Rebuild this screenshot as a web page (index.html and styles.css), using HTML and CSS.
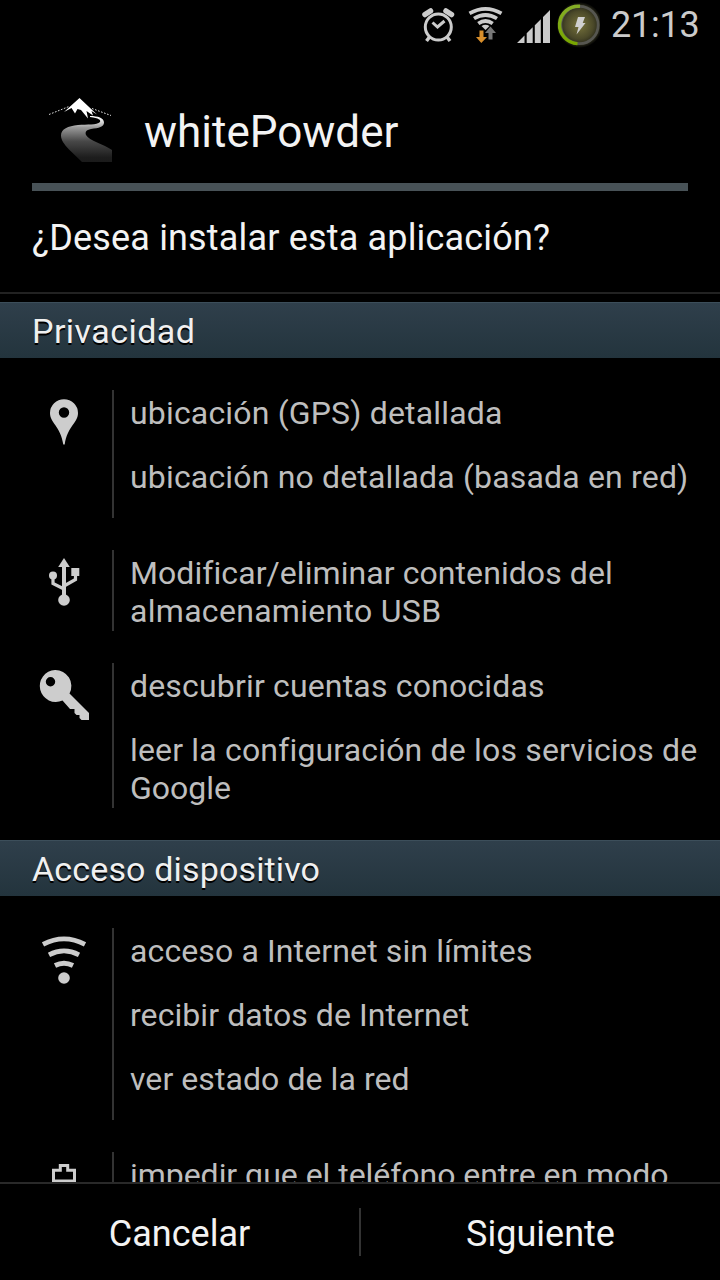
FILE: index.html
```html
<!DOCTYPE html>
<html lang="es">
<head>
<meta charset="utf-8">
<title>whitePowder</title>
<link rel="stylesheet" href="styles.css">
</head>
<body>
<div class="screen">
  <div class="status">
    <svg class="status-icons" width="190" height="50" viewBox="410 0 190 50">
      <defs>
        <radialGradient id="glow"><stop offset="0" stop-color="#77733c"/><stop offset=".6" stop-color="#4b4929"/><stop offset=".85" stop-color="#29291a"/><stop offset="1" stop-color="#000"/></radialGradient>
        <linearGradient id="charge" x2="0" y2="1"><stop offset="0" stop-color="#85ad26"/><stop offset="1" stop-color="#78a600"/></linearGradient>
      </defs>
      <g fill="none" stroke="#cbcbcb">
        <circle cx="438.3" cy="27" r="13" stroke-width="3"/>
        <path d="M432.500 22.500l5 4.500 7-6" stroke-width="3"/>
        <path d="M425 14.500l5.500-3.500M446 11l5.500 3.500" stroke-width="5.500" stroke-linecap="round"/>
        <path d="M429.500 37l-3 4M447 37l3 4" stroke-width="3.500"/>
      </g>
      <g fill="none" stroke="#cbcbcb" stroke-width="3.800">
        <path d="M469.500 13.300Q485.500 4.300 501.500 13.300"/>
        <path d="M474 18.500Q485.500 11.500 497 18.500"/>
        <path d="M478.300 23.500Q485.500 18.500 492.700 23.500"/>
        <path d="M481.500 26Q485.500 23.500 489.500 26L485.500 30z" fill="#cbcbcb" stroke="none"/>
      </g>
      <path d="M479.500 30.500h4v6.500h3.500l-5.700 6-5.300-6h3.500z" fill="#d98f2b"/>
      <path d="M488.500 39.500v-6.500h-3.500l5.500-6.500 5.500 6.500h-3.500v6.500z" fill="#777"/>
      <path d="M517 43l7.500-7.500V43zM526.700 33.300l6-6V43h-6zM534.800 25.200l6-6V43h-6zM543 17l7-7v33h-7z" fill="#cbcbcb"/>
      <circle cx="579.500" cy="25" r="23" fill="url(#glow)"/>
      <circle cx="579.500" cy="25" r="18.700" fill="none" stroke="#565650" stroke-width="2.800"/>
      <path d="M580 6.300a18.700 18.700 0 1 0-2.500 37.300" fill="none" stroke="url(#charge)" stroke-width="3.400"/>
      <path d="M578 17h7l-2.300 6h2.800L576.500 34.500l2-7.500H575z" fill="#d0d0d0"/>
    </svg>
    <span class="clock">21:13</span>
  </div>
  <header class="app">
    <svg width="64" height="64" viewBox="0 0 64 64">
      <defs><linearGradient id="road" x2="0" y2="1"><stop offset="0" stop-color="#fff"/><stop offset=".12" stop-color="#ddd"/><stop offset=".25" stop-color="#999"/><stop offset=".55" stop-color="#484848"/><stop offset=".9" stop-color="#1d1d1d"/><stop offset="1" stop-color="#1b1b1b"/></linearGradient></defs>
      <path d="M31.500 0L49 16.500 43.500 13 45 17.500 38.500 13 40 20.500 33 12 29.500 11 27 15.500 23.500 10 16 14Z" fill="#fff"/>
      <path d="M1 16.500L21 8.500M44 10.500L63 17.500" stroke="#d8d8d8" stroke-width="1" stroke-dasharray="1.700 1.500"/>
      <path d="M42 18C50 18 56 20 56 24.500 56 29 51 30 43 31 38 32 37 34 38 37 41 43 56 46 64 52V64H34L21 51.500C16 46 13 42 13 37.500 13 31 20 28 30 27 39 26.500 49 27 52 24 53 22 51 20 42 19Z" fill="url(#road)"/>
    </svg>
    <h1>whitePowder</h1>
  </header>
  <div class="question"><span>¿Desea instalar esta aplicación?</span></div>
  <main class="permissions">
    <h2 class="privacy">Privacidad</h2>
    <section class="group">
      <svg viewBox="0 0 64 64"><path fill="#cdcdcd" fill-rule="evenodd" d="M32 9.300A14 13.700 0 0 1 46 23C46 33 35.500 36 32.700 54.500H31.300C28.500 36 18 33 18 23A14 13.700 0 0 1 32 9.300ZM32 17.300a5.200 5.200 0 1 0 0 10.400 5.200 5.200 0 0 0 0-10.400Z"/></svg>
      <div class="items"><p class="fit-m">ubicación (GPS) detallada</p><p class="fit-m">ubicación no detallada (basada en red)</p></div>
    </section>
    <section class="group">
      <svg viewBox="0 0 64 64"><g fill="#cdcdcd"><path d="M32 8l5.800 9H26.200z"/><circle cx="21" cy="25.500" r="4"/><path d="M39.300 18h8v8h-8z"/><circle cx="32" cy="50" r="5.800"/></g><path fill="none" stroke="#cdcdcd" stroke-width="4" d="M32 15v32"/><path fill="none" stroke="#cdcdcd" stroke-width="3.200" d="M21 27v6.500l11 5.500M43.500 25v4.500L32 36"/></svg>
      <div class="items"><p><span class="fit-xs">Modificar/eliminar contenidos del</span><br><span class="fit-l">almacenamiento USB</span></p></div>
    </section>
    <section class="group">
      <svg viewBox="0 0 64 64"><path fill="#cdcdcd" fill-rule="evenodd" d="M23 7a16 16 0 0 1 14.500 23.500L57 50v7h-7.500L47.500 55v-3H44.500L42.500 50v-4h-4.500L30.500 37.500A16 16 0 1 1 23 7ZM18.500 14a4.700 4.700 0 1 0 0 9.400 4.700 4.700 0 0 0 0-9.400Z"/></svg>
      <div class="items"><p class="fit-m">descubrir cuentas conocidas</p><p><span class="fit-m">leer la configuración de los servicios de</span><br>Google</p></div>
    </section>
    <h2 class="device">Acceso dispositivo</h2>
    <section class="group">
      <svg viewBox="0 0 64 64"><g fill="none" stroke="#cdcdcd" stroke-width="4.800"><path d="M11 16.300Q32 5.500 53 16.300"/><path d="M17 26.800Q32 19 47 26.800"/><path d="M23 37.500Q32 33 41 37.500"/></g><circle cx="32" cy="50" r="5.800" fill="#cdcdcd"/></svg>
      <div class="items"><p class="fit-s">acceso a Internet sin límites</p><p class="fit-xs">recibir datos de Internet</p><p class="fit-xs">ver estado de la red</p></div>
    </section>
    <section class="group">
      <svg viewBox="0 0 64 64"><path fill="none" stroke="#cdcdcd" stroke-width="3" d="M21.500 29V18.200h6.800v-4.700h7.400v4.700h6.800V29z"/></svg>
      <div class="items"><p class="fit-tight">impedir que el teléfono entre en modo</p></div>
    </section>
  </main>
  <footer class="actions"><button class="cancel">Cancelar</button><i class="divider"></i><button class="next">Siguiente</button></footer>
</div>
</body>
</html>
```

FILE: styles.css
```css
* { box-sizing: border-box; margin: 0; }
body { background: #000; font-family: Roboto, "Noto Sans", sans-serif; }
.screen { width: 720px; height: 1280px; display: flex; flex-direction: column; overflow: hidden; background: #000; white-space: nowrap; }
.status { height: 50px; flex: none; display: flex; padding-left: 410px; }
.status-icons { flex: none; }
.clock { margin-left: 11px; font-size: 36px; line-height: 50px; color: #cbcbcb; letter-spacing: -.2px; }
.app { height: 141px; flex: none; margin: 0 32px; padding: 48px 0 0 16px; border-bottom: 8px solid #485257; display: flex; gap: 32px; }
.app svg { flex: none; }
h1 { font-size: 44px; font-weight: 400; line-height: 68px; color: #f3f3f3; }
.question { height: 103px; flex: none; padding: 26px 32px 0; border-bottom: 2px solid #222; font-size: 36px; line-height: 42px; letter-spacing: .17px; color: #f3f3f3; }
.permissions { flex: 1; min-height: 0; overflow: hidden; padding-top: 8px; }
h2 { height: 56px; padding-left: 32px; font-size: 34px; font-weight: 400; line-height: 56px; color: #f0f0f0; text-shadow: 0 2px 0 #000; background: linear-gradient(#2f3f4b, #23343d); border-top: 1px solid #3c4e5a; }
.privacy { letter-spacing: .45px; }
.device { letter-spacing: .15px; }
.group { display: flex; margin: 32px 0; padding-left: 32px; }
.group > svg { width: 64px; height: 64px; flex: none; margin-right: 16px; }
.items { border-left: 2px solid #333; padding-left: 16px; font-size: 32px; line-height: 38px; color: #bebebe; }
.items p { padding: 4px 0 1px; min-height: 64px; }
.fit-tight { letter-spacing: -.04px; }
.fit-xs { letter-spacing: .07px; }
.fit-s { letter-spacing: .12px; }
.fit-m { letter-spacing: .17px; }
.fit-l { letter-spacing: .3px; }
.actions { height: 98px; flex: none; display: flex; align-items: center; border-top: 2px solid #292929; }
.actions button { flex: 1; padding: 4px 0 0; border: 0; background: none; font: 36px/48px Roboto, sans-serif; color: #f3f3f3; }
.divider { width: 2px; height: 48px; background: #333; }
```
